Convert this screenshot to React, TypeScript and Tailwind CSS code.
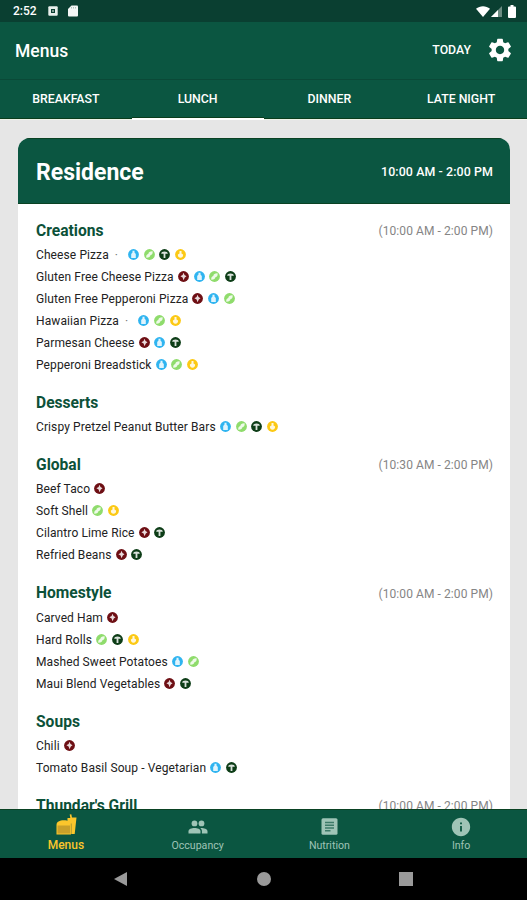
import clsx from "clsx";
import { MdInfo, MdSettings } from "react-icons/md";

type Tag = "milk" | "wheat" | "vegetarian" | "egg" | "gluten";

type Item = { name: string; tags: Tag[]; dot?: boolean };

type Station = { name: string; hours?: string; items: Item[] };

const tabs = ["BREAKFAST", "LUNCH", "DINNER", "LATE NIGHT"];
const activeTab = "LUNCH";

const stations: Station[] = [
  {
    name: "Creations",
    hours: "(10:00 AM - 2:00 PM)",
    items: [
      { name: "Cheese Pizza", dot: true, tags: ["milk", "wheat", "vegetarian", "egg"] },
      { name: "Gluten Free Cheese Pizza", tags: ["gluten", "milk", "wheat", "vegetarian"] },
      { name: "Gluten Free Pepperoni Pizza", tags: ["gluten", "milk", "wheat"] },
      { name: "Hawaiian Pizza", dot: true, tags: ["milk", "wheat", "egg"] },
      { name: "Parmesan Cheese", tags: ["gluten", "milk", "vegetarian"] },
      { name: "Pepperoni Breadstick", tags: ["milk", "wheat", "egg"] },
    ],
  },
  {
    name: "Desserts",
    items: [
      { name: "Crispy Pretzel Peanut Butter Bars", tags: ["milk", "wheat", "vegetarian", "egg"] },
    ],
  },
  {
    name: "Global",
    hours: "(10:30 AM - 2:00 PM)",
    items: [
      { name: "Beef Taco", tags: ["gluten"] },
      { name: "Soft Shell", tags: ["wheat", "egg"] },
      { name: "Cilantro Lime Rice", tags: ["gluten", "vegetarian"] },
      { name: "Refried Beans", tags: ["gluten", "vegetarian"] },
    ],
  },
  {
    name: "Homestyle",
    hours: "(10:00 AM - 2:00 PM)",
    items: [
      { name: "Carved Ham", tags: ["gluten"] },
      { name: "Hard Rolls", tags: ["wheat", "vegetarian", "egg"] },
      { name: "Mashed Sweet Potatoes", tags: ["milk", "wheat"] },
      { name: "Maui Blend Vegetables", tags: ["gluten", "vegetarian"] },
    ],
  },
  {
    name: "Soups",
    items: [
      { name: "Chili", tags: ["gluten"] },
      { name: "Tomato Basil Soup - Vegetarian", tags: ["milk", "vegetarian"] },
    ],
  },
  { name: "Thundar's Grill", hours: "(10:00 AM - 2:00 PM)", items: [] },
];

const tagColors: Record<Tag, string> = {
  milk: "#2fb4f0",
  wheat: "#8fdc6c",
  vegetarian: "#0d3d17",
  egg: "#fcc914",
  gluten: "#6e0f14",
};

const tagShapes: Record<Tag, string> = {
  milk: "M4.5 1.8h2v1.600l1.300 1.600v4H3.200V5l1.300-1.600z",
  wheat: "M2.300 8.700c-.3-2.200.4-3.400 2-3.800C4.500 3.200 6 2.200 8.600 2.300c.3 2.300-.4 3.500-2.200 3.900C6.200 7.900 4.900 8.800 2.300 8.700z",
  vegetarian: "M2.200 4.700c0-1.600 1.400-2.300 3.300-2.300s3.300.7 3.300 2.300H6.400v4.400H4.600V4.700z",
  egg: "M4.500 2h2v2.600l1.600 1c.2 2-.9 3.200-2.600 3.200S2.700 7.600 2.900 5.600l1.600-1z",
  gluten: "M5.500 1.700l1 2.200 2 1.400-1.700 1.200-1.300 2.700-.9-2.700-2.200-1.300 2.200-1.100z",
};

function TagIcon({ tag }: { tag: Tag }) {
  return (
    <svg viewBox="0 0 11 11" className="size-[11px] shrink-0">
      <circle cx="5.5" cy="5.5" r="5.4" fill={tagColors[tag]} />
      <path d={tagShapes[tag]} fill="#fff" opacity=".85" />
    </svg>
  );
}

function MenusIcon() {
  return (
    <svg viewBox="0 0 21 21" className="-mt-[3px] ml-[2px] size-[21px]">
      <path d="M11.500 4h2.800L13.700.600 15.300.200 16 3.600h4.500l-1.800 16.400H11z" fill="#fbc62c" />
      <path d="M.5 11C.5 7.800 3.500 6.300 7.800 6.300s7.200 1.500 7.200 4.700v9.500H.5z" fill="#fbc62c" />
      <path d="M1.500 11.500h12.500v8H1.500z" fill="#c9a02a" />
      <path d="M15.300 9.500v10.500" stroke="#8f8a32" strokeWidth=".7" />
    </svg>
  );
}

function OccupancyIcon() {
  return (
    <svg viewBox="0 0 20 14" className="-mt-[2px] h-[14px] w-[20px]" fill="currentColor">
      <circle cx="6.500" cy="3.400" r="2.900" />
      <circle cx="13.500" cy="3.400" r="2.900" />
      <path d="M.5 13.500v-2.300c0-2.100 3-3.200 6-3.200s6 1.100 6 3.200v2.300z" />
      <path d="M12.300 8c3.200-.2 7.200.9 7.200 3.200v2.300h-5.600v-2.300c0-1.300-.6-2.400-1.600-3.200z" />
    </svg>
  );
}

function NutritionIcon() {
  return (
    <svg viewBox="0 0 17 17" className="-mt-[2px] size-[17px]">
      <rect x=".5" y=".3" width="16" height="16.400" rx="1.500" fill="#9fc4b6" />
      <path d="M4 4.500h9M4 7.300h9M4 10h9M4 12.700h5.500" stroke="#3d7a68" strokeWidth="1.400" />
    </svg>
  );
}

function StatusBar() {
  return (
    <div className="flex h-[22px] shrink-0 items-center bg-[#0a3f31] pr-[11px] pl-[13px] text-white">
      <span className="w-[35px] text-[12px] font-medium">2:52</span>
      <svg viewBox="0 0 10 10" className="size-[10px]">
        <rect x=".3" y=".3" width="9.400" height="9.400" rx="1" fill="#e8efec" />
        <path d="M3 3h4v4H3z" fill="#0a3f31" />
        <path d="M4.300 4.300h1.400v1.400H4.300z" fill="#e8efec" />
      </svg>
      <svg viewBox="0 0 10 12" className="ml-[10px] h-[12px] w-[10px]">
        <path d="M3.500.5H9a1 1 0 0 1 1 1v9a1 1 0 0 1-1 1H1a1 1 0 0 1-1-1V4z" fill="#f4f7f6" />
        <path d="M3.500 2v1.500M5.500 2v1.500M7.500 2v1.500" stroke="#9db5ad" strokeWidth=".8" />
      </svg>
      <svg viewBox="0 0 14 11" className="ml-auto h-[11px] w-[14px]">
        <path d="M0 2.800C4-.600 10-.600 14 2.800L7 11z" fill="#fff" />
      </svg>
      <svg viewBox="0 0 11 11" className="ml-[1px] h-[11px] w-[11px]">
        <path d="M11 0v11H0z" fill="#6b8c82" />
        <path d="M7 4v7H0z" fill="#fff" />
      </svg>
      <svg viewBox="0 0 8 13" className="ml-[6px] h-[13px] w-[8px]">
        <path d="M2.500 0h3v1.500H7a1 1 0 0 1 1 1V12a1 1 0 0 1-1 1H1a1 1 0 0 1-1-1V2.500a1 1 0 0 1 1-1h1.500z" fill="#fff" />
      </svg>
    </div>
  );
}

function StationSection({ station }: { station: Station }) {
  return (
    <section className="pb-[14.3px]">
      <div className="flex h-[26px] items-center justify-between">
        <h2 className="pt-px text-[15.6px] font-bold text-[#0c5139]">{station.name}</h2>
        <span className="-mr-px text-[12px] tracking-[0.08px] text-[#858585]">{station.hours}</span>
      </div>
      {station.items.map((item) => (
        <div
          key={item.name}
          className="flex h-[22px] items-center text-[12px] tracking-[0.1px] text-[#222]"
        >
          <span className="whitespace-nowrap">{item.name}</span>
          {item.dot && <span className="w-[15px] pl-[6px] text-[#777]">·</span>}
          <div className="-mt-px ml-[4px] flex gap-[4.8px]">
            {item.tags.map((tag) => (
              <TagIcon key={tag} tag={tag} />
            ))}
          </div>
        </div>
      ))}
    </section>
  );
}

const navItems = [
  { label: "Menus", icon: <MenusIcon />, active: true },
  { label: "Occupancy", icon: <OccupancyIcon /> },
  { label: "Nutrition", icon: <NutritionIcon /> },
  { label: "Info", icon: <MdInfo className="-mt-px size-[22px]" /> },
];

export default function App() {
  return (
    <div className="flex h-[900px] w-[527px] flex-col overflow-hidden bg-[#e6e6e6] font-[Roboto,sans-serif]">
      <StatusBar />
      <header className="flex h-[57px] shrink-0 items-center bg-[#0b5641] pr-[13px] pl-[15px] text-white">
        <h1 className="pt-px text-[17.5px] font-medium">Menus</h1>
        <span className="mr-[15px] ml-auto text-[12.3px] font-medium">TODAY</span>
        <MdSettings className="-mt-px size-[28px]" />
      </header>
      <nav className="grid h-[41px] shrink-0 grid-cols-4 border-t border-[#0a4937] bg-[#0b5641] text-white">
        {tabs.map((tab) => (
          <div key={tab} className="flex flex-col justify-between text-[12.3px] font-medium">
            <span className="flex h-[39px] items-center justify-center">{tab}</span>
            <div
              className={clsx(
                "border-t border-[#0a3d1c]",
                tab === activeTab ? "-mt-[2px] h-[3px] bg-white" : "-mt-px h-[2px] bg-[#eef3e8]"
              )}
            />
          </div>
        ))}
      </nav>

      <main className="min-h-0 flex-1 overflow-hidden pt-[18px] pr-[17px] pl-[18px]">
        <div className="h-full overflow-hidden rounded-t-[12px] bg-white">
          <div className="flex h-[66px] items-center justify-between border-y border-[#0a4223] bg-[#0b5641] px-[18px] pt-[3px] text-white">
            <h2 className="pt-px text-[23px] font-bold">Residence</h2>
            <span className="-mr-px text-[12.4px] font-medium tracking-[0.1px]">10:00 AM - 2:00 PM</span>
          </div>
          <div className="px-[18px] pt-[13.8px]">
            {stations.map((station) => (
              <StationSection key={station.name} station={station} />
            ))}
          </div>
        </div>
      </main>

      <footer className="grid h-[49px] shrink-0 grid-cols-4 border-t border-[#0a4223] bg-[#0b5641]">
        {navItems.map(({ label, icon, active }) => (
          <div
            key={label}
            className={clsx(
              "flex flex-col items-center",
              active
                ? "pt-[4px] text-[12px] font-medium text-[#fbc62c]"
                : "pt-[6px] text-[10.6px] text-[#9fc4b6]"
            )}
          >
            <div className={clsx("flex items-center", active ? "h-[24px]" : "h-[23px]")}>{icon}</div>
            <span className="leading-[14px]">{label}</span>
          </div>
        ))}
      </footer>
      <div className="flex h-[42px] shrink-0 items-center bg-black text-[#9a9a9a]">
        <svg viewBox="0 0 13 14" className="ml-[114px] h-[14px] w-[13px]">
          <path d="M13 0v14L0 7z" fill="currentColor" />
        </svg>
        <div className="ml-[130px] size-[14px] rounded-full bg-current" />
        <div className="ml-[128px] size-[14px] bg-current" />
      </div>
    </div>
  );
}
